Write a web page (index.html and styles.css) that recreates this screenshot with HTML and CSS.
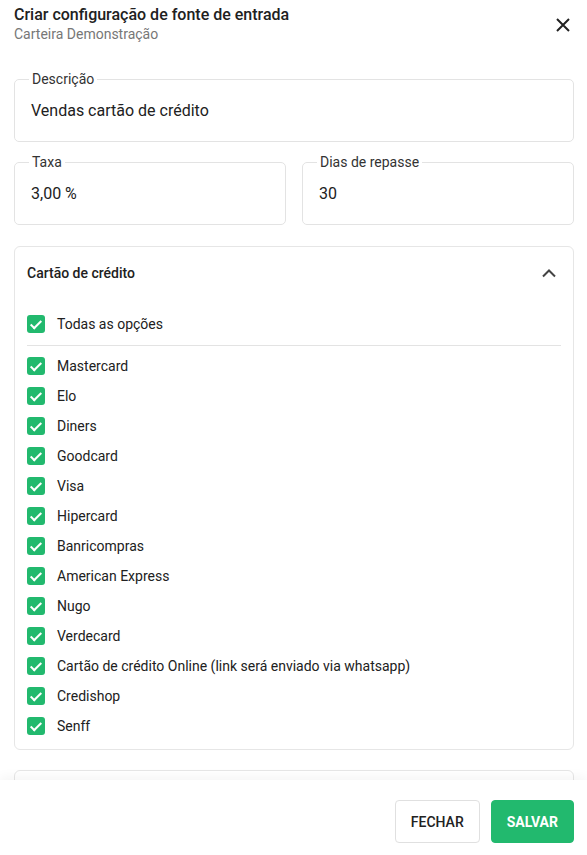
FILE: index.html
```html
<!DOCTYPE html>
<html lang="pt-BR">
<head>
    <meta charset="UTF-8">
    <meta name="viewport" content="width=device-width, initial-scale=1.0">
    <title>Criar configuração de fonte de entrada</title>
    <link rel="stylesheet" href="styles.css">
</head>
<body>
    <div class="dialog">
        <div class="content">
            <div class="head">
                <div>
                    <div class="title">Criar configuração de fonte de entrada</div>
                    <div class="subtitle">Carteira Demonstração</div>
                </div>
                <button class="close" title="Fechar">
                    <svg width="16" height="16" viewBox="0 0 16 16"><path d="M2 2 L14 14 M14 2 L2 14" stroke="#222" stroke-width="2" fill="none"/></svg>
                </button>
            </div>

            <fieldset class="field">
                <legend>Descrição</legend>
                <div class="value">Vendas cartão de crédito</div>
            </fieldset>

            <div class="row">
                <fieldset class="field">
                    <legend>Taxa</legend>
                    <div class="value">3,00 %</div>
                </fieldset>
                <fieldset class="field">
                    <legend>Dias de repasse</legend>
                    <div class="value">30</div>
                </fieldset>
            </div>

            <div class="card">
                <div class="card-head">
                    <span>Cartão de crédito</span>
                    <svg class="chevron" width="16" height="10" viewBox="0 0 16 10"><path d="M2 8.5 L8 2.5 L14 8.5" stroke="#444" stroke-width="2" fill="none"/></svg>
                </div>
                <div class="opt all"><span class="check"></span>Todas as opções</div>
                <div class="opts">
                    <div class="opt"><span class="check"></span>Mastercard</div>
                    <div class="opt"><span class="check"></span>Elo</div>
                    <div class="opt"><span class="check"></span>Diners</div>
                    <div class="opt"><span class="check"></span>Goodcard</div>
                    <div class="opt"><span class="check"></span>Visa</div>
                    <div class="opt"><span class="check"></span>Hipercard</div>
                    <div class="opt"><span class="check"></span>Banricompras</div>
                    <div class="opt"><span class="check"></span>American Express</div>
                    <div class="opt"><span class="check"></span>Nugo</div>
                    <div class="opt"><span class="check"></span>Verdecard</div>
                    <div class="opt"><span class="check"></span>Cartão de crédito Online (link será enviado via whatsapp)</div>
                    <div class="opt"><span class="check"></span>Credishop</div>
                    <div class="opt"><span class="check"></span>Senff</div>
                </div>
            </div>

            <div class="card next"></div>
        </div>
        <div class="footer">
            <button class="btn">FECHAR</button>
            <button class="btn primary">SALVAR</button>
        </div>
    </div>
</body>
</html>
```

FILE: styles.css
```css
body {
    margin: 0;
    font-family: Roboto, "Liberation Sans", sans-serif;
    color: #212121;
    background: #fff;
}

.dialog {
    height: 100vh;
    display: flex;
    flex-direction: column;
}

.content {
    flex: 1;
    overflow: hidden;
    padding: 0 13px 0 14px;
}

.head {
    display: flex;
    justify-content: space-between;
    align-items: flex-start;
    padding-top: 5px;
    height: 66px;
}

.title {
    font-size: 16px;
    font-weight: 500;
    line-height: 20px;
}

.subtitle {
    font-size: 14px;
    color: #777;
    line-height: 18px;
}

.close {
    border: none;
    background: none;
    padding: 0;
    margin: 12px 3px 0 0;
    width: 16px;
    height: 16px;
    cursor: pointer;
}

.field {
    margin: 0;
    padding: 0 16px 20px;
    border: 1px solid #e3e3e3;
    border-radius: 5px;
    min-width: 0;
}

.field legend {
    font-size: 14px;
    line-height: 16px;
    color: #333;
    padding: 0 3px;
    margin-left: -2px;
}

.field .value {
    font-size: 16px;
    line-height: 20px;
    margin-top: 14px;
}

.row {
    display: flex;
    gap: 16px;
    margin-top: 12px;
}

.row .field {
    flex: 1;
}

.card {
    margin-top: 21px;
    border: 1px solid #e6e6e6;
    border-radius: 6px;
    padding: 0 12px 8px;
}

.card-head {
    height: 52px;
    display: flex;
    justify-content: space-between;
    align-items: center;
    font-size: 14px;
    font-weight: 500;
}

.chevron {
    margin-right: 4px;
}

.all {
    margin-top: 10px;
}

.opts {
    border-top: 1px solid #e3e3e3;
    margin-top: 6px;
    padding-top: 5px;
}

.opt {
    height: 30px;
    display: flex;
    align-items: center;
    gap: 12px;
    font-size: 14px;
}

.check {
    width: 18px;
    height: 18px;
    border-radius: 3px;
    background: #22b96e;
    position: relative;
    flex: none;
}

.check::after {
    content: "";
    position: absolute;
    left: 6px;
    top: 2.5px;
    width: 4px;
    height: 9px;
    border: solid #fff;
    border-width: 0 2.5px 2.5px 0;
    transform: rotate(45deg);
}

.next {
    margin-top: 20px;
    height: 60px;
}

.footer {
    height: 75px;
    flex: none;
    display: flex;
    justify-content: flex-end;
    align-items: flex-start;
    gap: 11px;
    padding: 20px 13px 0;
    box-sizing: border-box;
    box-shadow: 0 -4px 10px rgba(0, 0, 0, 0.04);
    position: relative;
    background: #fff;
}

.btn {
    height: 43px;
    padding: 0 15px;
    font-family: Roboto, "Liberation Sans", sans-serif;
    font-size: 14px;
    font-weight: 500;
    color: #222;
    background: #fff;
    border: 1px solid #e0e0e0;
    border-radius: 4px;
    cursor: pointer;
}

.btn.primary {
    background: #22b96e;
    border-color: #22b96e;
    color: #fff;
    font-weight: 700;
}
```
